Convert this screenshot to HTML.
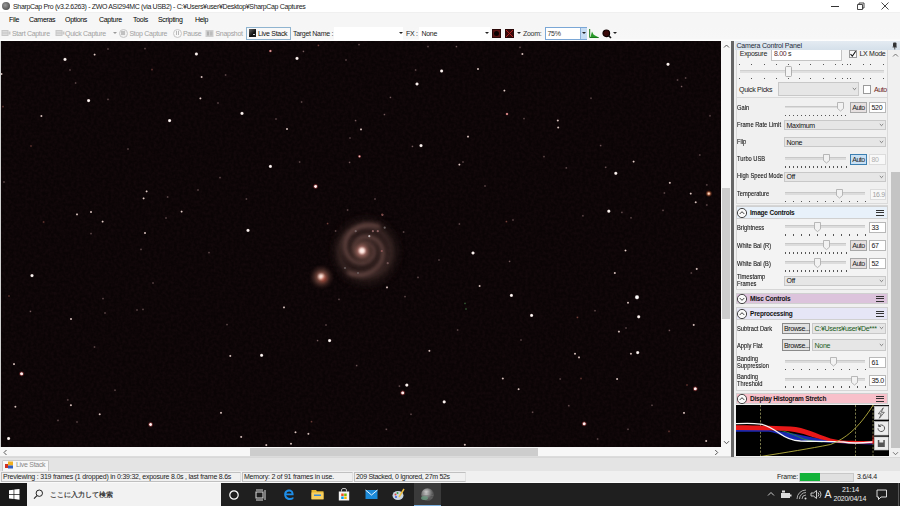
<!DOCTYPE html>
<html><head><meta charset="utf-8">
<style>
*{margin:0;padding:0;box-sizing:border-box}
html,body{width:900px;height:506px;overflow:hidden;background:#f0f0f0;font-family:"Liberation Sans",sans-serif;color:#000}
.a{position:absolute;white-space:nowrap}
.t{position:absolute;white-space:nowrap;font-size:7px;line-height:8px;letter-spacing:-0.3px}
#title{left:0;top:0;width:900px;height:12px;background:#fff}
#menu{left:0;top:12.5px;width:900px;height:14px;background:#f6f6f6}
#tool{left:0;top:26px;width:900px;height:15px;background:linear-gradient(#f6f6f6,#f7f7f7 85%,#fff)}
#img{left:0;top:41px;width:721px;height:406px;background:#0b0405;overflow:hidden}
#vs{left:721px;top:41px;width:10px;height:406px;background:#f0f0f0}
#split{left:731px;top:41px;width:2px;height:416px;background:#6a6a6a}
#panel{left:733px;top:41px;width:158px;height:416px;background:#f0f0f0}
#rs{left:891px;top:41px;width:9px;height:416px;background:#f0f0f0}
#hs{left:0;top:447px;width:731px;height:10px;background:#f0f0f0}
#tabs{left:0;top:457px;width:900px;height:14px;background:#f0f0f0}
#status{left:0;top:471px;width:900px;height:12px;background:#f0f0f0}
#task{left:0;top:483px;width:900px;height:23px;background:#1e1e1e}
.g{color:#a0a0a0}
</style></head><body>
<!-- title bar -->
<div class="a" id="title"></div>
<div class="a" style="left:1.5px;top:2px;width:8px;height:8px;border-radius:50%;background:radial-gradient(circle at 40% 40%,#9a9a9a,#3a3a3a)"></div>
<div class="t" style="left:13px;top:2.8px;color:#222;letter-spacing:-0.34px">SharpCap Pro (v3.2.6263) - ZWO ASI294MC (via USB2) - C:¥Users¥user¥Desktop¥SharpCap Captures</div>
<div class="a" style="left:831px;top:6px;width:8px;height:1px;background:#333"></div>
<svg class="a" style="left:855px;top:1px" width="10" height="10"><path d="M2.5 3.5h5v5h-5z M4 3.5v-1.5h5v5h-1.5" fill="none" stroke="#333" stroke-width="0.9"/></svg>
<svg class="a" style="left:880px;top:1px" width="10" height="10"><path d="M1.5 1.5l7 7M8.5 1.5l-7 7" stroke="#333" stroke-width="0.9"/></svg>
<!-- menu -->
<div class="a" id="menu"></div>
<div class="t" style="left:9px;top:15.5px">File</div>
<div class="t" style="left:29px;top:15.5px">Cameras</div>
<div class="t" style="left:65px;top:15.5px">Options</div>
<div class="t" style="left:99px;top:15.5px">Capture</div>
<div class="t" style="left:133px;top:15.5px">Tools</div>
<div class="t" style="left:158px;top:15.5px">Scripting</div>
<div class="t" style="left:195px;top:15.5px">Help</div>
<!-- toolbar -->
<div class="a" id="tool"></div>
<svg class="a" style="left:1px;top:29px" width="10" height="8"><rect x="0.5" y="1" width="7" height="6" fill="#c8c8c8"/><rect x="7.5" y="2.5" width="2" height="3" fill="#c8c8c8"/><path d="M1.5 2.5h5M1.5 4h5M1.5 5.5h5" stroke="#e8e8e8" stroke-width="0.6"/></svg>
<div class="t g" style="left:12px;top:29.5px">Start Capture</div>
<svg class="a" style="left:55px;top:29px" width="10" height="8"><rect x="0.5" y="1" width="7" height="6" fill="#c8c8c8"/><rect x="7.5" y="2.5" width="2" height="3" fill="#c8c8c8"/><path d="M1.5 2.5h5M1.5 4h5M1.5 5.5h5" stroke="#e8e8e8" stroke-width="0.6"/></svg>
<div class="t g" style="left:65px;top:29.5px">Quick Capture</div>
<div class="a" style="left:113px;top:32px;width:0;height:0;border-left:2px solid transparent;border-right:2px solid transparent;border-top:2px solid #999"></div>
<div class="a" style="left:118.5px;top:28.5px;width:9px;height:9px;border-radius:50%;border:1px solid #c8c8c8;background:#f0f0f0"></div>
<div class="a" style="left:121px;top:31px;width:4px;height:4px;background:#c0c0c0"></div>
<div class="t g" style="left:129.5px;top:29.5px">Stop Capture</div>
<div class="a" style="left:172.5px;top:28.5px;width:9px;height:9px;border-radius:50%;border:1px solid #c8c8c8"></div>
<div class="a" style="left:175.5px;top:31px;width:1px;height:4px;background:#b8b8b8"></div>
<div class="a" style="left:177.5px;top:31px;width:1px;height:4px;background:#b8b8b8"></div>
<div class="t g" style="left:183px;top:29.5px">Pause</div>
<svg class="a" style="left:205px;top:29px" width="9" height="9"><rect x="0.5" y="1" width="8" height="7" fill="#d0d0d0"/><rect x="2" y="2.5" width="2" height="4" fill="#b0b0b0"/><rect x="5" y="2.5" width="2.5" height="4" fill="#bcbcbc"/></svg>
<div class="t g" style="left:215.5px;top:29.5px">Snapshot</div>
<div class="a" style="left:246px;top:27px;width:45px;height:12.5px;border:1px solid #8fb4d0;background:#f8f8f8"></div>
<div class="a" style="left:249px;top:29px;width:7px;height:8px;background:linear-gradient(135deg,#666 0%,#111 60%,#222 100%)"></div>
<div class="a" style="left:253px;top:34px;width:2px;height:1px;background:#ccc"></div>
<div class="t" style="left:258px;top:29.5px;color:#111">Live Stack</div>
<div class="t" style="left:293px;top:29.5px;color:#222">Target Name :</div>
<div class="a" style="left:333.5px;top:26.5px;width:69px;height:13px;background:#fff"></div>
<div class="a" style="left:399px;top:32px;width:0;height:0;border-left:2px solid transparent;border-right:2px solid transparent;border-top:2px solid #222"></div>
<div class="t" style="left:406px;top:29.5px;color:#222">FX :</div>
<div class="a" style="left:418.5px;top:26.5px;width:71px;height:13px;background:#fff"></div>
<div class="t" style="left:421.5px;top:29.5px;color:#222">None</div>
<div class="a" style="left:485px;top:32px;width:0;height:0;border-left:2px solid transparent;border-right:2px solid transparent;border-top:2px solid #222"></div>
<div class="a" style="left:492px;top:29px;width:9px;height:9px;background:#5a1414;border:1px solid #2a0808"></div>
<div class="a" style="left:494px;top:31px;width:5px;height:5px;border-radius:50%;background:#0a0000"></div>
<svg class="a" style="left:504.5px;top:29px" width="9" height="9"><rect width="9" height="9" fill="#3a0a0a"/><path d="M1 1l7 7M8 1l-7 7" stroke="#b02020" stroke-width="1"/><rect x="0.5" y="0.5" width="8" height="8" fill="none" stroke="#2a0808"/></svg>
<div class="a" style="left:516.5px;top:32px;width:0;height:0;border-left:2px solid transparent;border-right:2px solid transparent;border-top:2px solid #222"></div>
<div class="t" style="left:523px;top:29.5px;color:#333">Zoom:</div>
<div class="a" style="left:545px;top:27px;width:42px;height:12.5px;border:1px solid #7aa7d6;background:#fff"></div>
<div class="t" style="left:547.5px;top:29.5px;color:#333">75%</div>
<div class="a" style="left:580px;top:27.5px;width:6.5px;height:11.5px;background:#c6dcf2;border-left:1px solid #8cb0d8"></div>
<div class="a" style="left:581.5px;top:32px;width:0;height:0;border-left:2px solid transparent;border-right:2px solid transparent;border-top:2px solid #222"></div>
<svg class="a" style="left:589px;top:29px" width="10" height="9"><path d="M0.7 0v8.5h9" fill="none" stroke="#1a7a1a" stroke-width="1"/><path d="M1.5 8L3 2.5 4.5 5.5 6 6.5 9 8z" fill="#2a9a2a"/></svg>
<svg class="a" style="left:602px;top:29px" width="10" height="10"><circle cx="4.3" cy="4.3" r="3.3" fill="#3a0a0a" stroke="#110000" stroke-width="1.2"/><path d="M6.5 6.5l2.5 2.5" stroke="#111" stroke-width="1.6"/></svg>
<div class="a" style="left:612.5px;top:32px;width:0;height:0;border-left:2px solid transparent;border-right:2px solid transparent;border-top:2px solid #222"></div>
<div class="a" style="left:0;top:41px;width:721px;height:406px;background:#0a0405;overflow:hidden">
<svg width="721" height="406" style="position:absolute;left:0;top:0">
<defs>
<radialGradient id="gb"><stop offset="0" stop-color="#fff"/><stop offset="0.45" stop-color="#f6ece8"/><stop offset="1" stop-color="#f4e0e0" stop-opacity="0"/></radialGradient>
<radialGradient id="gB"><stop offset="0" stop-color="#fff"/><stop offset="0.5" stop-color="#fafafa"/><stop offset="1" stop-color="#f0e0e0" stop-opacity="0"/></radialGradient>
<radialGradient id="gm"><stop offset="0" stop-color="#e8d8d0"/><stop offset="0.4" stop-color="#b8a4a0"/><stop offset="1" stop-color="#806868" stop-opacity="0"/></radialGradient>
<radialGradient id="gf"><stop offset="0" stop-color="#84686a"/><stop offset="1" stop-color="#3a2a2a" stop-opacity="0"/></radialGradient>
<radialGradient id="gr"><stop offset="0" stop-color="#fff"/><stop offset="0.38" stop-color="#f6dcdc"/><stop offset="0.65" stop-color="#b04848" stop-opacity="0.5"/><stop offset="1" stop-color="#802020" stop-opacity="0"/></radialGradient>
<radialGradient id="gp"><stop offset="0" stop-color="#f0d0d0"/><stop offset="0.45" stop-color="#c07070"/><stop offset="1" stop-color="#803030" stop-opacity="0"/></radialGradient>
<radialGradient id="go"><stop offset="0" stop-color="#7a4a40"/><stop offset="1" stop-color="#502020" stop-opacity="0"/></radialGradient>
<radialGradient id="gO"><stop offset="0" stop-color="#fff0e0"/><stop offset="0.25" stop-color="#f0b090"/><stop offset="0.6" stop-color="#a05030" stop-opacity="0.55"/><stop offset="1" stop-color="#602010" stop-opacity="0"/></radialGradient>
<radialGradient id="gg"><stop offset="0" stop-color="#4a7a4a"/><stop offset="1" stop-color="#204020" stop-opacity="0"/></radialGradient>
<radialGradient id="gcore"><stop offset="0" stop-color="#fff4f0"/><stop offset="0.15" stop-color="#f0c8c0"/><stop offset="0.35" stop-color="#a06860" stop-opacity="0.8"/><stop offset="0.65" stop-color="#604038" stop-opacity="0.4"/><stop offset="1" stop-color="#301c18" stop-opacity="0"/></radialGradient>
<radialGradient id="gcomp"><stop offset="0" stop-color="#fff8f0"/><stop offset="0.12" stop-color="#f0c8b8"/><stop offset="0.35" stop-color="#a86858" stop-opacity="0.65"/><stop offset="0.7" stop-color="#5a3830" stop-opacity="0.35"/><stop offset="1" stop-color="#301010" stop-opacity="0"/></radialGradient>
<filter id="bl" x="-50%" y="-50%" width="200%" height="200%"><feGaussianBlur stdDeviation="1.6"/></filter>
<filter id="bl3" x="-50%" y="-50%" width="200%" height="200%"><feGaussianBlur stdDeviation="2"/></filter>
<filter id="bl4" x="-100%" y="-100%" width="300%" height="300%"><feGaussianBlur stdDeviation="0.5"/></filter>
<filter id="bl2" x="-50%" y="-50%" width="200%" height="200%"><feGaussianBlur stdDeviation="4"/></filter>
<filter id="noise" x="0" y="0" width="100%" height="100%"><feTurbulence type="fractalNoise" baseFrequency="0.35" numOctaves="2" seed="3"/><feColorMatrix values="0 0 0 0 0.12  0 0 0 0 0.03  0 0 0 0 0.05  0.9 0 0 0 -0.25"/></filter>
</defs>
<rect width="721" height="406" filter="url(#noise)" opacity="0.22"/>
<ellipse cx="366" cy="210.8" rx="31" ry="32" fill="#3c2a26" filter="url(#bl2)" opacity="0.55"/>
<ellipse cx="365" cy="210.8" rx="26" ry="25" fill="none" stroke="#6a4c48" stroke-width="3" filter="url(#bl3)" opacity="0.35"/>
<path d="M359.2 205.7 L359.6 205.0 L360.0 204.4 L360.6 203.8 L361.2 203.3 L361.9 202.8 L362.7 202.4 L363.6 202.2 L364.5 202.0 L365.5 201.9 L366.5 202.0 L367.5 202.2 L368.5 202.5 L369.5 203.0 L370.4 203.6 L371.3 204.3 L372.0 205.1 L372.7 206.1 L373.2 207.2 L373.6 208.3 L373.9 209.5 L374.0 210.8 L373.9 212.1 L373.6 213.4 L373.1 214.7 L372.4 216.0 L371.6 217.2 L370.5 218.3 L369.3 219.3 L367.9 220.2 L366.4 220.9 L364.7 221.4 L363.0 221.8 L361.1 221.9 L359.2 221.7 L357.3 221.4 L355.4 220.7 L353.6 219.9 L351.8 218.7 L350.2 217.4 L348.7 215.8 L347.4 213.9 L346.4 211.9 L345.6 209.8 L345.2 207.4 L345.0 205.0 L345.2 202.5 L345.7 200.0 L346.6 197.5 L347.9 195.1 L349.6 192.8 L351.5 190.7 L353.9 188.7 L356.5 187.1 L359.4 185.7 L362.6 184.7 L366.0 184.1 L369.5 183.9 L373.1 184.2 L376.8 184.9 L380.4 186.0" fill="none" stroke="#7e5a54" stroke-width="3.8" filter="url(#bl3)" opacity="0.62"/>
<path d="M359.2 205.7 L359.6 205.0 L360.0 204.4 L360.6 203.8 L361.2 203.3 L361.9 202.8 L362.7 202.4 L363.6 202.2 L364.5 202.0 L365.5 201.9 L366.5 202.0 L367.5 202.2 L368.5 202.5 L369.5 203.0 L370.4 203.6 L371.3 204.3 L372.0 205.1 L372.7 206.1 L373.2 207.2 L373.6 208.3 L373.9 209.5 L374.0 210.8 L373.9 212.1 L373.6 213.4 L373.1 214.7 L372.4 216.0 L371.6 217.2 L370.5 218.3 L369.3 219.3 L367.9 220.2 L366.4 220.9 L364.7 221.4 L363.0 221.8 L361.1 221.9 L359.2 221.7 L357.3 221.4 L355.4 220.7 L353.6 219.9 L351.8 218.7 L350.2 217.4 L348.7 215.8 L347.4 213.9 L346.4 211.9 L345.6 209.8 L345.2 207.4 L345.0 205.0 L345.2 202.5 L345.7 200.0 L346.6 197.5 L347.9 195.1 L349.6 192.8 L351.5 190.7 L353.9 188.7 L356.5 187.1 L359.4 185.7 L362.6 184.7 L366.0 184.1 L369.5 183.9 L373.1 184.2 L376.8 184.9 L380.4 186.0" fill="none" stroke="#a07068" stroke-width="1" filter="url(#bl)" opacity="0.35"/>
<path d="M368.8 211.9 L368.4 212.6 L368.0 213.2 L367.4 213.8 L366.8 214.3 L366.1 214.8 L365.3 215.2 L364.4 215.4 L363.5 215.6 L362.5 215.7 L361.5 215.6 L360.5 215.4 L359.5 215.1 L358.5 214.6 L357.6 214.0 L356.7 213.3 L356.0 212.5 L355.3 211.5 L354.8 210.4 L354.4 209.3 L354.1 208.1 L354.0 206.8 L354.1 205.5 L354.4 204.2 L354.9 202.9 L355.6 201.6 L356.4 200.4 L357.5 199.3 L358.7 198.3 L360.1 197.4 L361.6 196.7 L363.3 196.2 L365.0 195.8 L366.9 195.7 L368.8 195.9 L370.7 196.2 L372.6 196.9 L374.4 197.7 L376.2 198.9 L377.8 200.2 L379.3 201.8 L380.6 203.7 L381.6 205.7 L382.4 207.8 L382.8 210.2 L383.0 212.6 L382.8 215.1 L382.3 217.6 L381.4 220.1 L380.1 222.5 L378.4 224.8 L376.5 226.9 L374.1 228.9 L371.5 230.5 L368.6 231.9 L365.4 232.9 L362.0 233.5 L358.5 233.7 L354.9 233.4 L351.2 232.7 L347.6 231.6" fill="none" stroke="#7e5a54" stroke-width="3.8" filter="url(#bl3)" opacity="0.62"/>
<path d="M368.8 211.9 L368.4 212.6 L368.0 213.2 L367.4 213.8 L366.8 214.3 L366.1 214.8 L365.3 215.2 L364.4 215.4 L363.5 215.6 L362.5 215.7 L361.5 215.6 L360.5 215.4 L359.5 215.1 L358.5 214.6 L357.6 214.0 L356.7 213.3 L356.0 212.5 L355.3 211.5 L354.8 210.4 L354.4 209.3 L354.1 208.1 L354.0 206.8 L354.1 205.5 L354.4 204.2 L354.9 202.9 L355.6 201.6 L356.4 200.4 L357.5 199.3 L358.7 198.3 L360.1 197.4 L361.6 196.7 L363.3 196.2 L365.0 195.8 L366.9 195.7 L368.8 195.9 L370.7 196.2 L372.6 196.9 L374.4 197.7 L376.2 198.9 L377.8 200.2 L379.3 201.8 L380.6 203.7 L381.6 205.7 L382.4 207.8 L382.8 210.2 L383.0 212.6 L382.8 215.1 L382.3 217.6 L381.4 220.1 L380.1 222.5 L378.4 224.8 L376.5 226.9 L374.1 228.9 L371.5 230.5 L368.6 231.9 L365.4 232.9 L362.0 233.5 L358.5 233.7 L354.9 233.4 L351.2 232.7 L347.6 231.6" fill="none" stroke="#a07068" stroke-width="1" filter="url(#bl)" opacity="0.35"/>
<circle cx="362" cy="209.8" r="13" fill="url(#gcore)"/>
<circle cx="362" cy="209.8" r="2.2" fill="#fff0ea" filter="url(#bl)"/>
<circle cx="369.3" cy="195.2" r="1.1" fill="#d8d0d0" opacity="0.8" filter="url(#bl4)"/>
<circle cx="382.4" cy="173.8" r="1.1" fill="#c08080" opacity="0.8" filter="url(#bl4)"/>
<circle cx="384.7" cy="186.7" r="1.1" fill="#807878" opacity="0.8" filter="url(#bl4)"/>
<circle cx="355.7" cy="190.2" r="1.1" fill="#807070" opacity="0.8" filter="url(#bl4)"/>
<circle cx="372.9" cy="190.2" r="1.1" fill="#a07070" opacity="0.8" filter="url(#bl4)"/>
<circle cx="377.8" cy="190.2" r="1.1" fill="#a07070" opacity="0.8" filter="url(#bl4)"/>
<circle cx="381.8" cy="210" r="1.1" fill="#a06060" opacity="0.8" filter="url(#bl4)"/>
<circle cx="387.7" cy="222.2" r="1.1" fill="#806060" opacity="0.8" filter="url(#bl4)"/>
<circle cx="345" cy="227" r="1.1" fill="#706868" opacity="0.8" filter="url(#bl4)"/>
<circle cx="358" cy="232" r="1.1" fill="#706868" opacity="0.8" filter="url(#bl4)"/>
<circle cx="321.5" cy="236" r="13" fill="url(#gcomp)"/>
<circle cx="323.5" cy="238" r="3" fill="#a02818" opacity="0.45" filter="url(#bl)"/>
<circle cx="320.5" cy="235" r="1.6" fill="#fff" filter="url(#bl)"/>
<circle cx="65.0" cy="18.4" r="2.1" fill="url(#gb)"/>
<circle cx="94.6" cy="13.6" r="1.55" fill="url(#gm)"/>
<circle cx="108.0" cy="8.0" r="1.55" fill="url(#gf)"/>
<circle cx="145.0" cy="7.6" r="1.55" fill="url(#gf)"/>
<circle cx="152.0" cy="28.6" r="1.55" fill="url(#go)"/>
<circle cx="70.0" cy="29.0" r="1.55" fill="url(#gf)"/>
<circle cx="75.6" cy="42.0" r="1.55" fill="url(#gf)"/>
<circle cx="88.6" cy="59.6" r="2.1" fill="url(#gb)"/>
<circle cx="108.0" cy="58.4" r="1.55" fill="url(#gf)"/>
<circle cx="41.4" cy="75.0" r="1.55" fill="url(#gm)"/>
<circle cx="169.6" cy="79.6" r="2.1" fill="url(#gb)"/>
<circle cx="3.0" cy="65.6" r="1.55" fill="url(#go)"/>
<circle cx="1.5" cy="33.0" r="1.55" fill="url(#gm)"/>
<circle cx="196.4" cy="13.0" r="2.1" fill="url(#gb)"/>
<circle cx="270.4" cy="10.0" r="1.8" fill="url(#gp)"/>
<circle cx="297.0" cy="17.4" r="2.1" fill="url(#gb)"/>
<circle cx="318.4" cy="4.4" r="1.55" fill="url(#go)"/>
<circle cx="303.4" cy="10.4" r="1.55" fill="url(#gf)"/>
<circle cx="346.0" cy="19.0" r="1.55" fill="url(#gf)"/>
<circle cx="359.0" cy="3.6" r="1.55" fill="url(#gf)"/>
<circle cx="201.6" cy="36.0" r="1.55" fill="url(#gm)"/>
<circle cx="225.6" cy="34.0" r="1.55" fill="url(#gf)"/>
<circle cx="200.4" cy="57.4" r="1.55" fill="url(#gm)"/>
<circle cx="218.0" cy="62.0" r="1.55" fill="url(#gf)"/>
<circle cx="242.0" cy="72.4" r="2.1" fill="url(#gb)"/>
<circle cx="301.6" cy="61.0" r="1.55" fill="url(#gf)"/>
<circle cx="276.0" cy="78.0" r="1.55" fill="url(#gf)"/>
<circle cx="287.0" cy="88.0" r="1.55" fill="url(#gm)"/>
<circle cx="355.6" cy="79.6" r="1.55" fill="url(#gf)"/>
<circle cx="350.0" cy="97.0" r="1.55" fill="url(#gf)"/>
<circle cx="441.6" cy="30.0" r="2.1" fill="url(#gb)"/>
<circle cx="417.0" cy="43.0" r="2.1" fill="url(#gb)"/>
<circle cx="478.0" cy="28.0" r="1.55" fill="url(#gm)"/>
<circle cx="504.4" cy="49.6" r="1.55" fill="url(#gm)"/>
<circle cx="507.0" cy="73.0" r="1.8" fill="url(#gp)"/>
<circle cx="524.0" cy="77.6" r="1.55" fill="url(#gf)"/>
<circle cx="522.4" cy="13.0" r="1.55" fill="url(#gm)"/>
<circle cx="520.0" cy="6.4" r="1.55" fill="url(#gf)"/>
<circle cx="428.0" cy="5.6" r="1.55" fill="url(#gf)"/>
<circle cx="456.4" cy="5.6" r="1.55" fill="url(#gf)"/>
<circle cx="415.6" cy="29.0" r="1.55" fill="url(#gf)"/>
<circle cx="390.4" cy="56.4" r="1.55" fill="url(#gf)"/>
<circle cx="384.4" cy="73.6" r="1.55" fill="url(#gf)"/>
<circle cx="361.0" cy="88.4" r="1.55" fill="url(#gm)"/>
<circle cx="468.0" cy="95.6" r="1.55" fill="url(#gm)"/>
<circle cx="668.0" cy="23.3" r="2.1" fill="url(#gb)"/>
<circle cx="677.5" cy="39.0" r="1.55" fill="url(#gf)"/>
<circle cx="685.6" cy="37.0" r="1.55" fill="url(#gf)"/>
<circle cx="681.6" cy="45.5" r="1.55" fill="url(#gf)"/>
<circle cx="591.0" cy="57.2" r="1.55" fill="url(#gf)"/>
<circle cx="557.8" cy="79.5" r="1.55" fill="url(#gm)"/>
<circle cx="558.2" cy="86.5" r="1.55" fill="url(#gm)"/>
<circle cx="710.0" cy="74.8" r="1.55" fill="url(#gf)"/>
<circle cx="31.0" cy="105.0" r="1.55" fill="url(#go)"/>
<circle cx="128.0" cy="108.0" r="1.55" fill="url(#gf)"/>
<circle cx="4.0" cy="141.0" r="1.55" fill="url(#gf)"/>
<circle cx="146.6" cy="150.4" r="1.55" fill="url(#gm)"/>
<circle cx="143.6" cy="157.4" r="1.55" fill="url(#gm)"/>
<circle cx="77.0" cy="173.4" r="1.55" fill="url(#gm)"/>
<circle cx="91.0" cy="171.0" r="1.55" fill="url(#gm)"/>
<circle cx="102.6" cy="180.6" r="1.55" fill="url(#gm)"/>
<circle cx="43.6" cy="181.0" r="1.55" fill="url(#go)"/>
<circle cx="91.0" cy="192.6" r="1.55" fill="url(#gf)"/>
<circle cx="145.0" cy="192.0" r="1.55" fill="url(#gm)"/>
<circle cx="167.6" cy="156.0" r="1.55" fill="url(#gf)"/>
<circle cx="166.0" cy="177.0" r="1.55" fill="url(#gf)"/>
<circle cx="270.4" cy="125.4" r="2.1" fill="url(#gb)"/>
<circle cx="299.6" cy="121.0" r="1.55" fill="url(#gf)"/>
<circle cx="349.6" cy="121.4" r="1.55" fill="url(#gf)"/>
<circle cx="359.5" cy="115.4" r="1.8" fill="url(#gp)"/>
<circle cx="315.6" cy="145.4" r="2.9" fill="url(#gr)"/>
<circle cx="246.4" cy="158.0" r="1.55" fill="url(#gf)"/>
<circle cx="198.0" cy="149.0" r="1.55" fill="url(#gf)"/>
<circle cx="220.0" cy="136.6" r="1.55" fill="url(#gf)"/>
<circle cx="181.6" cy="170.6" r="1.55" fill="url(#gm)"/>
<circle cx="248.0" cy="189.4" r="2.1" fill="url(#gb)"/>
<circle cx="347.6" cy="169.0" r="1.55" fill="url(#gf)"/>
<circle cx="327.6" cy="182.6" r="1.55" fill="url(#go)"/>
<circle cx="335.6" cy="190.0" r="1.55" fill="url(#gf)"/>
<circle cx="421.0" cy="104.6" r="2.1" fill="url(#gb)"/>
<circle cx="412.4" cy="105.4" r="1.55" fill="url(#gf)"/>
<circle cx="459.4" cy="123.6" r="1.55" fill="url(#gm)"/>
<circle cx="463.0" cy="121.0" r="1.55" fill="url(#gf)"/>
<circle cx="485.0" cy="145.0" r="1.55" fill="url(#gf)"/>
<circle cx="375.0" cy="158.0" r="1.55" fill="url(#gf)"/>
<circle cx="382.0" cy="173.4" r="1.55" fill="url(#go)"/>
<circle cx="403.6" cy="191.0" r="1.55" fill="url(#gf)"/>
<circle cx="459.4" cy="183.0" r="1.55" fill="url(#gf)"/>
<circle cx="506.4" cy="180.6" r="1.55" fill="url(#go)"/>
<circle cx="513.0" cy="179.0" r="1.55" fill="url(#gf)"/>
<circle cx="615.8" cy="132.3" r="2.1" fill="url(#gb)"/>
<circle cx="633.6" cy="120.6" r="1.55" fill="url(#gm)"/>
<circle cx="605.7" cy="126.3" r="1.55" fill="url(#gf)"/>
<circle cx="600.7" cy="104.6" r="1.55" fill="url(#gf)"/>
<circle cx="566.3" cy="126.9" r="1.55" fill="url(#gf)"/>
<circle cx="544.0" cy="115.6" r="1.55" fill="url(#gf)"/>
<circle cx="669.8" cy="141.8" r="1.55" fill="url(#gm)"/>
<circle cx="664.4" cy="152.0" r="1.55" fill="url(#gf)"/>
<circle cx="690.7" cy="152.6" r="1.55" fill="url(#gm)"/>
<circle cx="706.8" cy="143.9" r="1.55" fill="url(#gf)"/>
<circle cx="695.7" cy="161.3" r="1.55" fill="url(#gm)"/>
<circle cx="706.8" cy="164.0" r="1.55" fill="url(#gf)"/>
<circle cx="708.8" cy="152.6" r="3.6" fill="url(#gO)"/>
<circle cx="608.8" cy="170.2" r="2.1" fill="url(#gb)"/>
<circle cx="621.9" cy="171.4" r="1.55" fill="url(#gf)"/>
<circle cx="631.0" cy="176.8" r="1.55" fill="url(#gf)"/>
<circle cx="582.9" cy="174.8" r="1.55" fill="url(#gf)"/>
<circle cx="663.0" cy="169.4" r="1.55" fill="url(#gf)"/>
<circle cx="699.8" cy="114.0" r="1.55" fill="url(#gf)"/>
<circle cx="32.0" cy="234.6" r="2.1" fill="url(#gb)"/>
<circle cx="141.0" cy="208.4" r="1.55" fill="url(#gf)"/>
<circle cx="153.0" cy="242.0" r="1.55" fill="url(#gf)"/>
<circle cx="103.0" cy="257.6" r="1.55" fill="url(#gf)"/>
<circle cx="71.0" cy="278.0" r="1.55" fill="url(#gm)"/>
<circle cx="30.4" cy="270.4" r="1.55" fill="url(#gf)"/>
<circle cx="105.0" cy="272.0" r="1.55" fill="url(#gf)"/>
<circle cx="137.0" cy="269.0" r="1.55" fill="url(#gf)"/>
<circle cx="143.0" cy="268.4" r="1.55" fill="url(#gf)"/>
<circle cx="9.0" cy="255.0" r="1.55" fill="url(#go)"/>
<circle cx="284.0" cy="266.4" r="1.55" fill="url(#gm)"/>
<circle cx="227.0" cy="283.6" r="1.55" fill="url(#gf)"/>
<circle cx="329.6" cy="299.6" r="2.1" fill="url(#gb)"/>
<circle cx="317.6" cy="299.6" r="1.55" fill="url(#gf)"/>
<circle cx="326.0" cy="284.0" r="1.55" fill="url(#gf)"/>
<circle cx="209.0" cy="211.6" r="1.55" fill="url(#gf)"/>
<circle cx="339.0" cy="258.4" r="1.55" fill="url(#gf)"/>
<circle cx="473.0" cy="212.0" r="2.1" fill="url(#gb)"/>
<circle cx="439.0" cy="219.0" r="1.55" fill="url(#gf)"/>
<circle cx="509.6" cy="220.4" r="1.55" fill="url(#gf)"/>
<circle cx="479.6" cy="245.0" r="1.55" fill="url(#gm)"/>
<circle cx="511.4" cy="254.4" r="2.1" fill="url(#gb)"/>
<circle cx="531.6" cy="274.4" r="2.1" fill="url(#gb)"/>
<circle cx="387.0" cy="246.4" r="1.55" fill="url(#gm)"/>
<circle cx="418.0" cy="236.4" r="1.55" fill="url(#gf)"/>
<circle cx="405.0" cy="255.6" r="1.55" fill="url(#gf)"/>
<circle cx="465.0" cy="262.4" r="1.5" fill="url(#gg)"/>
<circle cx="466.0" cy="268.0" r="1.5" fill="url(#gg)"/>
<circle cx="457.6" cy="289.0" r="1.55" fill="url(#gf)"/>
<circle cx="521.0" cy="299.0" r="1.55" fill="url(#gf)"/>
<circle cx="625.5" cy="209.5" r="1.55" fill="url(#gm)"/>
<circle cx="614.8" cy="232.0" r="1.55" fill="url(#gm)"/>
<circle cx="696.7" cy="227.9" r="1.55" fill="url(#gm)"/>
<circle cx="691.3" cy="232.0" r="1.55" fill="url(#gf)"/>
<circle cx="637.0" cy="256.2" r="2.6" fill="url(#gB)"/>
<circle cx="628.0" cy="261.7" r="1.55" fill="url(#gm)"/>
<circle cx="638.7" cy="275.8" r="2.1" fill="url(#gb)"/>
<circle cx="577.4" cy="276.4" r="1.55" fill="url(#go)"/>
<circle cx="595.0" cy="269.7" r="1.55" fill="url(#gf)"/>
<circle cx="693.7" cy="283.9" r="1.55" fill="url(#gm)"/>
<circle cx="618.9" cy="290.6" r="1.55" fill="url(#gm)"/>
<circle cx="626.0" cy="287.0" r="1.55" fill="url(#gf)"/>
<circle cx="669.4" cy="289.4" r="1.55" fill="url(#gf)"/>
<circle cx="14.0" cy="323.1" r="1.55" fill="url(#gm)"/>
<circle cx="21.6" cy="332.8" r="2.9" fill="url(#gr)"/>
<circle cx="15.4" cy="365.7" r="1.55" fill="url(#gm)"/>
<circle cx="8.6" cy="397.5" r="2.1" fill="url(#gb)"/>
<circle cx="70.9" cy="364.2" r="1.55" fill="url(#gm)"/>
<circle cx="67.8" cy="358.9" r="1.55" fill="url(#gf)"/>
<circle cx="99.7" cy="373.3" r="1.55" fill="url(#gm)"/>
<circle cx="58.0" cy="379.4" r="1.55" fill="url(#gf)"/>
<circle cx="77.0" cy="381.0" r="1.55" fill="url(#gf)"/>
<circle cx="115.0" cy="349.2" r="1.55" fill="url(#gf)"/>
<circle cx="94.5" cy="306.0" r="1.55" fill="url(#gf)"/>
<circle cx="150.6" cy="383.5" r="2.9" fill="url(#gr)"/>
<circle cx="230.3" cy="314.9" r="1.55" fill="url(#gm)"/>
<circle cx="261.6" cy="314.3" r="2.1" fill="url(#gb)"/>
<circle cx="221.0" cy="371.8" r="1.55" fill="url(#gm)"/>
<circle cx="241.2" cy="395.9" r="1.55" fill="url(#gm)"/>
<circle cx="266.3" cy="404.1" r="1.55" fill="url(#gm)"/>
<circle cx="291.0" cy="402.7" r="1.55" fill="url(#gm)"/>
<circle cx="295.5" cy="391.3" r="1.55" fill="url(#gm)"/>
<circle cx="308.4" cy="392.8" r="1.55" fill="url(#gm)"/>
<circle cx="311.5" cy="380.7" r="1.55" fill="url(#go)"/>
<circle cx="356.7" cy="324.6" r="1.55" fill="url(#gf)"/>
<circle cx="429.4" cy="309.8" r="1.55" fill="url(#gm)"/>
<circle cx="406.8" cy="344.1" r="2.1" fill="url(#gb)"/>
<circle cx="402.7" cy="351.9" r="2.9" fill="url(#gr)"/>
<circle cx="399.4" cy="345.1" r="1.55" fill="url(#gf)"/>
<circle cx="444.2" cy="360.9" r="2.1" fill="url(#gb)"/>
<circle cx="502.8" cy="337.5" r="1.55" fill="url(#gm)"/>
<circle cx="518.6" cy="348.2" r="1.55" fill="url(#gm)"/>
<circle cx="386.3" cy="388.3" r="1.55" fill="url(#gf)"/>
<circle cx="411.0" cy="373.3" r="1.55" fill="url(#gf)"/>
<circle cx="464.8" cy="403.7" r="1.55" fill="url(#gm)"/>
<circle cx="532.6" cy="371.2" r="1.55" fill="url(#gf)"/>
<circle cx="575.0" cy="312.7" r="1.55" fill="url(#gm)"/>
<circle cx="579.0" cy="316.4" r="1.55" fill="url(#gm)"/>
<circle cx="630.9" cy="312.7" r="1.55" fill="url(#gm)"/>
<circle cx="637.7" cy="311.6" r="2.1" fill="url(#gb)"/>
<circle cx="617.1" cy="338.0" r="1.55" fill="url(#gm)"/>
<circle cx="560.2" cy="338.0" r="1.55" fill="url(#gf)"/>
<circle cx="581.0" cy="337.5" r="1.55" fill="url(#go)"/>
<circle cx="695.3" cy="347.8" r="2.9" fill="url(#gr)"/>
<circle cx="687.0" cy="344.0" r="1.55" fill="url(#go)"/>
<circle cx="684.0" cy="371.9" r="1.55" fill="url(#gm)"/>
<circle cx="652.0" cy="364.3" r="1.55" fill="url(#gf)"/>
<circle cx="584.2" cy="382.8" r="2.9" fill="url(#gr)"/>
<circle cx="628.0" cy="388.3" r="1.55" fill="url(#gf)"/>
<circle cx="669.0" cy="390.4" r="1.55" fill="url(#go)"/>
<circle cx="706.2" cy="400.0" r="1.55" fill="url(#gm)"/>
<circle cx="597.6" cy="398.0" r="1.55" fill="url(#gf)"/>
<circle cx="568.8" cy="364.7" r="1.55" fill="url(#gf)"/>
</svg>
<div class="a" style="left:0;top:0;width:1px;height:406px;background:#cfcfcf"></div>
</div>
<div class="a" style="left:733px;top:41px;width:158px;height:416px;background:#f0f0f0"></div>
<div class="a" style="left:736px;top:50px;width:152px;height:48px;background:#f3f3f3;border:1px solid #dadada;border-top:none"></div>
<div class="a" style="left:736px;top:50px;width:152px;height:48px;overflow:hidden"><div class="t" style="left:3.8px;top:-0.5px;color:#222;font-size:7px">Exposure</div>
<div class="a" style="left:35.4px;top:-3px;width:71px;height:13.5px;background:#fff;border:1px solid #c4c4c4"></div>
<div class="t" style="left:38px;top:-0.5px;color:#222"><span style="color:#5a2a2a">8.00</span> s</div>
</div>
<div class="a" style="left:849px;top:50px;width:8px;height:7.5px;background:#fafafa;border:1px solid #9a9a9a"></div>
<svg class="a" style="left:849px;top:50px" width="8" height="8"><path d="M1.5 4l1.8 2.2 3.4-5" fill="none" stroke="#111" stroke-width="1.1"/></svg>
<div class="t" style="left:859.5px;top:50px;color:#222">LX Mode</div>
<div class="a" style="left:739.3px;top:63.6px;width:1px;height:1.5px;background:#555"></div>
<div class="a" style="left:751.1px;top:63.6px;width:1px;height:1.5px;background:#555"></div>
<div class="a" style="left:763.5px;top:63.6px;width:1px;height:1.5px;background:#555"></div>
<div class="a" style="left:775.5px;top:63.6px;width:1px;height:1.5px;background:#555"></div>
<div class="a" style="left:787.7px;top:63.6px;width:1px;height:1.5px;background:#555"></div>
<div class="a" style="left:798.5px;top:63.6px;width:1px;height:1.5px;background:#555"></div>
<div class="a" style="left:810.2px;top:63.6px;width:1px;height:1.5px;background:#555"></div>
<div class="a" style="left:822.9px;top:63.6px;width:1px;height:1.5px;background:#555"></div>
<div class="a" style="left:834.5px;top:63.6px;width:1px;height:1.5px;background:#555"></div>
<div class="a" style="left:841.9px;top:63.6px;width:1px;height:1.5px;background:#555"></div>
<div class="a" style="left:847.1px;top:63.6px;width:1px;height:1.5px;background:#555"></div>
<div class="a" style="left:850.1px;top:63.6px;width:1px;height:1.5px;background:#555"></div>
<div class="a" style="left:862.5px;top:63.6px;width:1px;height:1.5px;background:#555"></div>
<div class="a" style="left:869.5px;top:63.6px;width:1px;height:1.5px;background:#555"></div>
<div class="a" style="left:883.2px;top:63.6px;width:1px;height:1.5px;background:#555"></div>
<div class="a" style="left:740px;top:70px;width:144px;height:2.5px;background:#e0e0e0;border-top:0.5px solid #cfcfcf"></div>
<svg class="a" style="left:785px;top:66px" width="7" height="11"><rect x="0.5" y="0.5" width="6" height="10" rx="1" fill="#f4f4f4" stroke="#a0a0a0" stroke-width="0.8"/></svg>
<div class="a" style="left:739.3px;top:77.8px;width:1px;height:1.5px;background:#555"></div>
<div class="a" style="left:751.1px;top:77.8px;width:1px;height:1.5px;background:#555"></div>
<div class="a" style="left:763.5px;top:77.8px;width:1px;height:1.5px;background:#555"></div>
<div class="a" style="left:775.5px;top:77.8px;width:1px;height:1.5px;background:#555"></div>
<div class="a" style="left:787.7px;top:77.8px;width:1px;height:1.5px;background:#555"></div>
<div class="a" style="left:798.5px;top:77.8px;width:1px;height:1.5px;background:#555"></div>
<div class="a" style="left:810.2px;top:77.8px;width:1px;height:1.5px;background:#555"></div>
<div class="a" style="left:822.9px;top:77.8px;width:1px;height:1.5px;background:#555"></div>
<div class="a" style="left:834.5px;top:77.8px;width:1px;height:1.5px;background:#555"></div>
<div class="a" style="left:841.9px;top:77.8px;width:1px;height:1.5px;background:#555"></div>
<div class="a" style="left:847.1px;top:77.8px;width:1px;height:1.5px;background:#555"></div>
<div class="a" style="left:850.1px;top:77.8px;width:1px;height:1.5px;background:#555"></div>
<div class="a" style="left:862.5px;top:77.8px;width:1px;height:1.5px;background:#555"></div>
<div class="a" style="left:869.5px;top:77.8px;width:1px;height:1.5px;background:#555"></div>
<div class="a" style="left:883.2px;top:77.8px;width:1px;height:1.5px;background:#555"></div>
<div class="t" style="left:739px;top:86px;color:#222;font-size:7px">Quick Picks</div>
<div class="a" style="left:778.4px;top:82.4px;width:81.0px;height:14.0px;background:#e6e6e6;border:1px solid #c8c8c8"></div>
<svg class="a" style="left:852.4px;top:87.4px" width="5" height="4"><path d="M0.8 1l1.7 1.6 1.7-1.6" fill="none" stroke="#555" stroke-width="0.7"/></svg>
<div class="a" style="left:863px;top:85px;width:8px;height:8.5px;background:#fff;border:1px solid #9a9a9a"></div>
<div class="t" style="left:874px;top:86px;color:#6a1a1a;letter-spacing:-0.4px">Auto</div>
<div class="t" style="left:737px;top:105.2px;font-size:6.6px;letter-spacing:0px;color:#111;line-height:6.6px;-webkit-text-stroke:0.1px #222;transform:scaleX(0.87);transform-origin:0 0">Gain</div>
<div class="a" style="left:785px;top:105.5px;width:59px;height:2.5px;background:#dcdcdc;border-top:0.5px solid #c8c8c8"></div>
<svg class="a" style="left:837px;top:102px" width="8" height="10"><path d="M0.5 0.5h6v6l-3 2.5l-3 -2.5z" fill="#f2f2f2" stroke="#a8a8a8" stroke-width="0.8"/></svg>
<div class="a" style="left:784.5px;top:114.5px;width:1px;height:1.5px;background:#555"></div>
<div class="a" style="left:788.5px;top:114.5px;width:1px;height:1.5px;background:#555"></div>
<div class="a" style="left:792.5px;top:114.5px;width:1px;height:1.5px;background:#555"></div>
<div class="a" style="left:796.5px;top:114.5px;width:1px;height:1.5px;background:#555"></div>
<div class="a" style="left:800.5px;top:114.5px;width:1px;height:1.5px;background:#555"></div>
<div class="a" style="left:804.5px;top:114.5px;width:1px;height:1.5px;background:#555"></div>
<div class="a" style="left:808.5px;top:114.5px;width:1px;height:1.5px;background:#555"></div>
<div class="a" style="left:812.5px;top:114.5px;width:1px;height:1.5px;background:#555"></div>
<div class="a" style="left:816.5px;top:114.5px;width:1px;height:1.5px;background:#555"></div>
<div class="a" style="left:820.5px;top:114.5px;width:1px;height:1.5px;background:#555"></div>
<div class="a" style="left:824.5px;top:114.5px;width:1px;height:1.5px;background:#555"></div>
<div class="a" style="left:828.5px;top:114.5px;width:1px;height:1.5px;background:#555"></div>
<div class="a" style="left:832.5px;top:114.5px;width:1px;height:1.5px;background:#555"></div>
<div class="a" style="left:836.5px;top:114.5px;width:1px;height:1.5px;background:#555"></div>
<div class="a" style="left:840.5px;top:114.5px;width:1px;height:1.5px;background:#555"></div>
<div class="a" style="left:844.5px;top:114.5px;width:1px;height:1.5px;background:#555"></div>
<div class="a" style="left:850.4px;top:102.4px;width:17.0px;height:11.0px;background:#e6e0e0;border:1px solid #a8a8a8"></div>
<div class="t" style="left:852.1999999999999px;top:104.30000000000001px;color:#222;letter-spacing:-0.45px">Auto</div>
<div class="a" style="left:869px;top:102.4px;width:17.399999999999977px;height:11.0px;background:#fff;border:1px solid #b8b8b8"></div>
<div class="t" style="left:871.5px;top:104.30000000000001px;color:#111">520</div>
<div class="t" style="left:737px;top:122.2px;font-size:6.6px;letter-spacing:0px;color:#111;line-height:6.6px;-webkit-text-stroke:0.1px #222;transform:scaleX(0.87);transform-origin:0 0">Frame Rate Limit</div>
<div class="a" style="left:783.6px;top:120.4px;width:102.79999999999995px;height:9.799999999999983px;background:#e6e6e6;border:1px solid #c8c8c8"></div>
<div class="t" style="left:786.6px;top:121.7px;color:#111">Maximum</div>
<svg class="a" style="left:879.4px;top:123.3px" width="5" height="4"><path d="M0.8 1l1.7 1.6 1.7-1.6" fill="none" stroke="#555" stroke-width="0.7"/></svg>
<div class="t" style="left:737px;top:139.2px;font-size:6.6px;letter-spacing:0px;color:#111;line-height:6.6px;-webkit-text-stroke:0.1px #222;transform:scaleX(0.87);transform-origin:0 0">Flip</div>
<div class="a" style="left:783.6px;top:137px;width:102.79999999999995px;height:10.400000000000006px;background:#e6e6e6;border:1px solid #c8c8c8"></div>
<div class="t" style="left:786.6px;top:138.6px;color:#111">None</div>
<svg class="a" style="left:879.4px;top:140.2px" width="5" height="4"><path d="M0.8 1l1.7 1.6 1.7-1.6" fill="none" stroke="#555" stroke-width="0.7"/></svg>
<div class="t" style="left:737px;top:156.2px;font-size:6.6px;letter-spacing:0px;color:#111;line-height:6.6px;-webkit-text-stroke:0.1px #222;transform:scaleX(0.87);transform-origin:0 0">Turbo USB</div>
<div class="a" style="left:785px;top:157px;width:61px;height:2.5px;background:#dcdcdc;border-top:0.5px solid #c8c8c8"></div>
<svg class="a" style="left:823px;top:153.5px" width="8" height="10.0"><path d="M0.5 0.5h6v6.0l-3 2.5l-3 -2.5z" fill="#f2f2f2" stroke="#a8a8a8" stroke-width="0.8"/></svg>
<div class="a" style="left:784.5px;top:166.2px;width:1px;height:1.5px;background:#555"></div>
<div class="a" style="left:788.6px;top:166.2px;width:1px;height:1.5px;background:#555"></div>
<div class="a" style="left:792.6px;top:166.2px;width:1px;height:1.5px;background:#555"></div>
<div class="a" style="left:796.7px;top:166.2px;width:1px;height:1.5px;background:#555"></div>
<div class="a" style="left:800.8px;top:166.2px;width:1px;height:1.5px;background:#555"></div>
<div class="a" style="left:804.8px;top:166.2px;width:1px;height:1.5px;background:#555"></div>
<div class="a" style="left:808.9px;top:166.2px;width:1px;height:1.5px;background:#555"></div>
<div class="a" style="left:813.0px;top:166.2px;width:1px;height:1.5px;background:#555"></div>
<div class="a" style="left:817.0px;top:166.2px;width:1px;height:1.5px;background:#555"></div>
<div class="a" style="left:821.1px;top:166.2px;width:1px;height:1.5px;background:#555"></div>
<div class="a" style="left:825.2px;top:166.2px;width:1px;height:1.5px;background:#555"></div>
<div class="a" style="left:829.2px;top:166.2px;width:1px;height:1.5px;background:#555"></div>
<div class="a" style="left:833.3px;top:166.2px;width:1px;height:1.5px;background:#555"></div>
<div class="a" style="left:837.4px;top:166.2px;width:1px;height:1.5px;background:#555"></div>
<div class="a" style="left:841.4px;top:166.2px;width:1px;height:1.5px;background:#555"></div>
<div class="a" style="left:845.5px;top:166.2px;width:1px;height:1.5px;background:#555"></div>
<div class="a" style="left:850.4px;top:154.4px;width:17.0px;height:10.599999999999994px;background:#c8e0f4;border:1px solid #3c7fb1"></div>
<div class="t" style="left:852.1999999999999px;top:156.1px;color:#222;letter-spacing:-0.45px">Auto</div>
<div class="a" style="left:869px;top:154.4px;width:17.399999999999977px;height:10.599999999999994px;background:#f8f8f8;border:1px solid #dcdcdc"></div>
<div class="t" style="left:871.5px;top:156.1px;color:#b0b0b0">80</div>
<div class="t" style="left:737px;top:173.2px;font-size:6.6px;letter-spacing:0px;color:#111;line-height:6.6px;-webkit-text-stroke:0.1px #222;transform:scaleX(0.87);transform-origin:0 0">High Speed Mode</div>
<div class="a" style="left:783.6px;top:171.6px;width:102.79999999999995px;height:10.400000000000006px;background:#e6e6e6;border:1px solid #c8c8c8"></div>
<div class="t" style="left:786.6px;top:173.20000000000002px;color:#111">Off</div>
<svg class="a" style="left:879.4px;top:174.8px" width="5" height="4"><path d="M0.8 1l1.7 1.6 1.7-1.6" fill="none" stroke="#555" stroke-width="0.7"/></svg>
<div class="t" style="left:737px;top:190.7px;font-size:6.6px;letter-spacing:0px;color:#111;line-height:6.6px;-webkit-text-stroke:0.1px #222;transform:scaleX(0.87);transform-origin:0 0">Temperature</div>
<div class="a" style="left:785px;top:192px;width:80px;height:2.5px;background:#dcdcdc;border-top:0.5px solid #c8c8c8"></div>
<svg class="a" style="left:836px;top:188.5px" width="8" height="10.0"><path d="M0.5 0.5h6v6.0l-3 2.5l-3 -2.5z" fill="#f2f2f2" stroke="#a8a8a8" stroke-width="0.8"/></svg>
<div class="a" style="left:784.5px;top:200.8px;width:1px;height:1.5px;background:#555"></div>
<div class="a" style="left:792.5px;top:200.8px;width:1px;height:1.5px;background:#555"></div>
<div class="a" style="left:800.5px;top:200.8px;width:1px;height:1.5px;background:#555"></div>
<div class="a" style="left:808.5px;top:200.8px;width:1px;height:1.5px;background:#555"></div>
<div class="a" style="left:816.5px;top:200.8px;width:1px;height:1.5px;background:#555"></div>
<div class="a" style="left:824.5px;top:200.8px;width:1px;height:1.5px;background:#555"></div>
<div class="a" style="left:832.5px;top:200.8px;width:1px;height:1.5px;background:#555"></div>
<div class="a" style="left:840.5px;top:200.8px;width:1px;height:1.5px;background:#555"></div>
<div class="a" style="left:848.5px;top:200.8px;width:1px;height:1.5px;background:#555"></div>
<div class="a" style="left:856.5px;top:200.8px;width:1px;height:1.5px;background:#555"></div>
<div class="a" style="left:864.5px;top:200.8px;width:1px;height:1.5px;background:#555"></div>
<div class="a" style="left:870px;top:189px;width:16.399999999999977px;height:10.5px;background:#f8f8f8;border:1px solid #dcdcdc"></div>
<div class="t" style="left:872.5px;top:190.65px;color:#a0a0a0">16.9</div>
<div class="a" style="left:736px;top:98px;width:152px;height:106px;border:1px solid #dadada;border-top:none;background:transparent"></div>
<div class="a" style="left:736px;top:205px;width:152px;height:85px;background:#f3f3f3;border:1px solid #d6d6d6"></div>
<div class="a" style="left:736px;top:206px;width:152px;height:13px;background:#e8f1fa;border:0.5px solid #d0d0d0"></div>
<svg class="a" style="left:736px;top:206.5px" width="12" height="12"><circle cx="6" cy="6" r="4.6" fill="#fafafa" stroke="#333" stroke-width="0.9"/><path d="M3.8 6.9l2.2-2.2 2.2 2.2" fill="none" stroke="#222" stroke-width="0.9"/></svg>
<div class="t" style="left:750px;top:208.9px;font-weight:bold;font-size:6.5px;color:#111;letter-spacing:-0.2px">Image Controls</div>
<div class="a" style="left:876px;top:209.5px;width:8px;height:1.2px;background:#333"></div>
<div class="a" style="left:876px;top:212.0px;width:8px;height:1.2px;background:#333"></div>
<div class="a" style="left:876px;top:214.5px;width:8px;height:1.2px;background:#333"></div>
<div class="t" style="left:737px;top:224.7px;font-size:6.6px;letter-spacing:0px;color:#111;line-height:6.6px;-webkit-text-stroke:0.1px #222;transform:scaleX(0.87);transform-origin:0 0">Brightness</div>
<div class="a" style="left:785px;top:225px;width:80px;height:2.5px;background:#dcdcdc;border-top:0.5px solid #c8c8c8"></div>
<svg class="a" style="left:814.4px;top:222px" width="8" height="10.599999999999994"><path d="M0.5 0.5h6v6.599999999999994l-3 2.5l-3 -2.5z" fill="#f2f2f2" stroke="#a8a8a8" stroke-width="0.8"/></svg>
<div class="a" style="left:784.5px;top:234.2px;width:1px;height:1.5px;background:#555"></div>
<div class="a" style="left:792.5px;top:234.2px;width:1px;height:1.5px;background:#555"></div>
<div class="a" style="left:800.5px;top:234.2px;width:1px;height:1.5px;background:#555"></div>
<div class="a" style="left:808.5px;top:234.2px;width:1px;height:1.5px;background:#555"></div>
<div class="a" style="left:816.5px;top:234.2px;width:1px;height:1.5px;background:#555"></div>
<div class="a" style="left:824.5px;top:234.2px;width:1px;height:1.5px;background:#555"></div>
<div class="a" style="left:832.5px;top:234.2px;width:1px;height:1.5px;background:#555"></div>
<div class="a" style="left:840.5px;top:234.2px;width:1px;height:1.5px;background:#555"></div>
<div class="a" style="left:848.5px;top:234.2px;width:1px;height:1.5px;background:#555"></div>
<div class="a" style="left:856.5px;top:234.2px;width:1px;height:1.5px;background:#555"></div>
<div class="a" style="left:864.5px;top:234.2px;width:1px;height:1.5px;background:#555"></div>
<div class="a" style="left:869px;top:222.4px;width:17.399999999999977px;height:10.599999999999994px;background:#fff;border:1px solid #b8b8b8"></div>
<div class="t" style="left:871.5px;top:224.1px;color:#111">33</div>
<div class="t" style="left:737px;top:242.7px;font-size:6.6px;letter-spacing:0px;color:#111;line-height:6.6px;-webkit-text-stroke:0.1px #222;transform:scaleX(0.87);transform-origin:0 0">White Bal (R)</div>
<div class="a" style="left:785px;top:243px;width:61px;height:2.5px;background:#dcdcdc;border-top:0.5px solid #c8c8c8"></div>
<svg class="a" style="left:823px;top:240px" width="8" height="10.599999999999994"><path d="M0.5 0.5h6v6.599999999999994l-3 2.5l-3 -2.5z" fill="#f2f2f2" stroke="#a8a8a8" stroke-width="0.8"/></svg>
<div class="a" style="left:784.5px;top:252.2px;width:1px;height:1.5px;background:#555"></div>
<div class="a" style="left:788.6px;top:252.2px;width:1px;height:1.5px;background:#555"></div>
<div class="a" style="left:792.6px;top:252.2px;width:1px;height:1.5px;background:#555"></div>
<div class="a" style="left:796.7px;top:252.2px;width:1px;height:1.5px;background:#555"></div>
<div class="a" style="left:800.8px;top:252.2px;width:1px;height:1.5px;background:#555"></div>
<div class="a" style="left:804.8px;top:252.2px;width:1px;height:1.5px;background:#555"></div>
<div class="a" style="left:808.9px;top:252.2px;width:1px;height:1.5px;background:#555"></div>
<div class="a" style="left:813.0px;top:252.2px;width:1px;height:1.5px;background:#555"></div>
<div class="a" style="left:817.0px;top:252.2px;width:1px;height:1.5px;background:#555"></div>
<div class="a" style="left:821.1px;top:252.2px;width:1px;height:1.5px;background:#555"></div>
<div class="a" style="left:825.2px;top:252.2px;width:1px;height:1.5px;background:#555"></div>
<div class="a" style="left:829.2px;top:252.2px;width:1px;height:1.5px;background:#555"></div>
<div class="a" style="left:833.3px;top:252.2px;width:1px;height:1.5px;background:#555"></div>
<div class="a" style="left:837.4px;top:252.2px;width:1px;height:1.5px;background:#555"></div>
<div class="a" style="left:841.4px;top:252.2px;width:1px;height:1.5px;background:#555"></div>
<div class="a" style="left:845.5px;top:252.2px;width:1px;height:1.5px;background:#555"></div>
<div class="a" style="left:850.4px;top:240px;width:17.0px;height:11px;background:#e6e0e0;border:1px solid #a8a8a8"></div>
<div class="t" style="left:852.1999999999999px;top:241.9px;color:#222;letter-spacing:-0.45px">Auto</div>
<div class="a" style="left:869px;top:240px;width:17.399999999999977px;height:11px;background:#fff;border:1px solid #b8b8b8"></div>
<div class="t" style="left:871.5px;top:241.9px;color:#111">67</div>
<div class="t" style="left:737px;top:260.7px;font-size:6.6px;letter-spacing:0px;color:#111;line-height:6.6px;-webkit-text-stroke:0.1px #222;transform:scaleX(0.87);transform-origin:0 0">White Bal (B)</div>
<div class="a" style="left:785px;top:261px;width:61px;height:2.5px;background:#dcdcdc;border-top:0.5px solid #c8c8c8"></div>
<svg class="a" style="left:814px;top:258px" width="8" height="10.600000000000023"><path d="M0.5 0.5h6v6.600000000000023l-3 2.5l-3 -2.5z" fill="#f2f2f2" stroke="#a8a8a8" stroke-width="0.8"/></svg>
<div class="a" style="left:784.5px;top:270.4px;width:1px;height:1.5px;background:#555"></div>
<div class="a" style="left:788.6px;top:270.4px;width:1px;height:1.5px;background:#555"></div>
<div class="a" style="left:792.6px;top:270.4px;width:1px;height:1.5px;background:#555"></div>
<div class="a" style="left:796.7px;top:270.4px;width:1px;height:1.5px;background:#555"></div>
<div class="a" style="left:800.8px;top:270.4px;width:1px;height:1.5px;background:#555"></div>
<div class="a" style="left:804.8px;top:270.4px;width:1px;height:1.5px;background:#555"></div>
<div class="a" style="left:808.9px;top:270.4px;width:1px;height:1.5px;background:#555"></div>
<div class="a" style="left:813.0px;top:270.4px;width:1px;height:1.5px;background:#555"></div>
<div class="a" style="left:817.0px;top:270.4px;width:1px;height:1.5px;background:#555"></div>
<div class="a" style="left:821.1px;top:270.4px;width:1px;height:1.5px;background:#555"></div>
<div class="a" style="left:825.2px;top:270.4px;width:1px;height:1.5px;background:#555"></div>
<div class="a" style="left:829.2px;top:270.4px;width:1px;height:1.5px;background:#555"></div>
<div class="a" style="left:833.3px;top:270.4px;width:1px;height:1.5px;background:#555"></div>
<div class="a" style="left:837.4px;top:270.4px;width:1px;height:1.5px;background:#555"></div>
<div class="a" style="left:841.4px;top:270.4px;width:1px;height:1.5px;background:#555"></div>
<div class="a" style="left:845.5px;top:270.4px;width:1px;height:1.5px;background:#555"></div>
<div class="a" style="left:850.4px;top:258px;width:17.0px;height:11px;background:#e6e0e0;border:1px solid #a8a8a8"></div>
<div class="t" style="left:852.1999999999999px;top:259.9px;color:#222;letter-spacing:-0.45px">Auto</div>
<div class="a" style="left:869px;top:258px;width:17.399999999999977px;height:11px;background:#fff;border:1px solid #b8b8b8"></div>
<div class="t" style="left:871.5px;top:259.9px;color:#111">52</div>
<div class="t" style="left:737px;top:274.2px;font-size:6.6px;letter-spacing:0px;color:#111;line-height:6.6px;-webkit-text-stroke:0.1px #222;transform:scaleX(0.87);transform-origin:0 0">Timestamp<br>Frames</div>
<div class="a" style="left:783.6px;top:275.6px;width:102.79999999999995px;height:10.799999999999955px;background:#e6e6e6;border:1px solid #c8c8c8"></div>
<div class="t" style="left:786.6px;top:277.4px;color:#111">Off</div>
<svg class="a" style="left:879.4px;top:279.0px" width="5" height="4"><path d="M0.8 1l1.7 1.6 1.7-1.6" fill="none" stroke="#555" stroke-width="0.7"/></svg>
<div class="a" style="left:736px;top:293px;width:152px;height:11.399999999999977px;background:#dcc3dc;border:0.5px solid #d0d0d0"></div>
<svg class="a" style="left:736px;top:292.7px" width="12" height="12"><circle cx="6" cy="6" r="4.6" fill="#fafafa" stroke="#333" stroke-width="0.9"/><path d="M3.8 5.1l2.2 2.2 2.2-2.2" fill="none" stroke="#222" stroke-width="0.9"/></svg>
<div class="t" style="left:750px;top:295.09999999999997px;font-weight:bold;font-size:6.5px;color:#111;letter-spacing:-0.2px">Misc Controls</div>
<div class="a" style="left:876px;top:295.7px;width:8px;height:1.2px;background:#333"></div>
<div class="a" style="left:876px;top:298.2px;width:8px;height:1.2px;background:#333"></div>
<div class="a" style="left:876px;top:300.7px;width:8px;height:1.2px;background:#333"></div>
<div class="a" style="left:736px;top:306.5px;width:152px;height:84px;background:#f3f3f3;border:1px solid #d6d6d6"></div>
<div class="a" style="left:736px;top:307.4px;width:152px;height:12.600000000000023px;background:#e6e6f6;border:0.5px solid #d0d0d0"></div>
<svg class="a" style="left:736px;top:307.7px" width="12" height="12"><circle cx="6" cy="6" r="4.6" fill="#fafafa" stroke="#333" stroke-width="0.9"/><path d="M3.8 6.9l2.2-2.2 2.2 2.2" fill="none" stroke="#222" stroke-width="0.9"/></svg>
<div class="t" style="left:750px;top:310.09999999999997px;font-weight:bold;font-size:6.5px;color:#111;letter-spacing:-0.2px">Preprocessing</div>
<div class="a" style="left:876px;top:310.7px;width:8px;height:1.2px;background:#333"></div>
<div class="a" style="left:876px;top:313.2px;width:8px;height:1.2px;background:#333"></div>
<div class="a" style="left:876px;top:315.7px;width:8px;height:1.2px;background:#333"></div>
<div class="t" style="left:737px;top:325.7px;font-size:6.6px;letter-spacing:0px;color:#111;line-height:6.6px;-webkit-text-stroke:0.1px #222;transform:scaleX(0.87);transform-origin:0 0">Subtract Dark</div>
<div class="a" style="left:782.4px;top:322.6px;width:27.2px;height:11.4px;background:#e2e2e2;border:1px solid #8a8a8a"></div>
<div class="t" style="left:784px;top:324.8px;color:#111;letter-spacing:-0.4px">Browse...</div>
<div class="a" style="left:811.6px;top:322.6px;width:74.79999999999995px;height:11.399999999999977px;background:#e6e6e6;border:1px solid #c8c8c8"></div>
<div class="t" style="left:814.6px;top:324.7px;color:#1a5a1a">C:¥Users¥user¥De***</div>
<svg class="a" style="left:879.4px;top:326.3px" width="5" height="4"><path d="M0.8 1l1.7 1.6 1.7-1.6" fill="none" stroke="#555" stroke-width="0.7"/></svg>
<div class="t" style="left:737px;top:342.7px;font-size:6.6px;letter-spacing:0px;color:#111;line-height:6.6px;-webkit-text-stroke:0.1px #222;transform:scaleX(0.87);transform-origin:0 0">Apply Flat</div>
<div class="a" style="left:782.4px;top:339.4px;width:27.2px;height:11.6px;background:#e2e2e2;border:1px solid #8a8a8a"></div>
<div class="t" style="left:784px;top:341.8px;color:#111;letter-spacing:-0.4px">Browse...</div>
<div class="a" style="left:811.6px;top:339.4px;width:74.79999999999995px;height:11.600000000000023px;background:#e6e6e6;border:1px solid #c8c8c8"></div>
<div class="t" style="left:814.6px;top:341.59999999999997px;color:#1a5a1a">None</div>
<svg class="a" style="left:879.4px;top:343.2px" width="5" height="4"><path d="M0.8 1l1.7 1.6 1.7-1.6" fill="none" stroke="#555" stroke-width="0.7"/></svg>
<div class="t" style="left:737px;top:356.2px;font-size:6.6px;letter-spacing:0px;color:#111;line-height:6.6px;-webkit-text-stroke:0.1px #222;transform:scaleX(0.87);transform-origin:0 0">Banding<br>Suppression</div>
<div class="a" style="left:785px;top:360px;width:80px;height:2.5px;background:#dcdcdc;border-top:0.5px solid #c8c8c8"></div>
<svg class="a" style="left:830px;top:357px" width="8" height="10"><path d="M0.5 0.5h6v6l-3 2.5l-3 -2.5z" fill="#f2f2f2" stroke="#a8a8a8" stroke-width="0.8"/></svg>
<div class="a" style="left:784.5px;top:368.8px;width:1px;height:1.5px;background:#555"></div>
<div class="a" style="left:792.5px;top:368.8px;width:1px;height:1.5px;background:#555"></div>
<div class="a" style="left:800.5px;top:368.8px;width:1px;height:1.5px;background:#555"></div>
<div class="a" style="left:808.5px;top:368.8px;width:1px;height:1.5px;background:#555"></div>
<div class="a" style="left:816.5px;top:368.8px;width:1px;height:1.5px;background:#555"></div>
<div class="a" style="left:824.5px;top:368.8px;width:1px;height:1.5px;background:#555"></div>
<div class="a" style="left:832.5px;top:368.8px;width:1px;height:1.5px;background:#555"></div>
<div class="a" style="left:840.5px;top:368.8px;width:1px;height:1.5px;background:#555"></div>
<div class="a" style="left:848.5px;top:368.8px;width:1px;height:1.5px;background:#555"></div>
<div class="a" style="left:856.5px;top:368.8px;width:1px;height:1.5px;background:#555"></div>
<div class="a" style="left:864.5px;top:368.8px;width:1px;height:1.5px;background:#555"></div>
<div class="a" style="left:869px;top:357.4px;width:17.399999999999977px;height:10.600000000000023px;background:#fff;border:1px solid #b8b8b8"></div>
<div class="t" style="left:871.5px;top:359.09999999999997px;color:#111">61</div>
<div class="t" style="left:737px;top:374.2px;font-size:6.6px;letter-spacing:0px;color:#111;line-height:6.6px;-webkit-text-stroke:0.1px #222;transform:scaleX(0.87);transform-origin:0 0">Banding<br>Threshold</div>
<div class="a" style="left:785px;top:378px;width:80px;height:2.5px;background:#dcdcdc;border-top:0.5px solid #c8c8c8"></div>
<svg class="a" style="left:851px;top:375.5px" width="8" height="10.0"><path d="M0.5 0.5h6v6.0l-3 2.5l-3 -2.5z" fill="#f2f2f2" stroke="#a8a8a8" stroke-width="0.8"/></svg>
<div class="a" style="left:784.5px;top:386.4px;width:1px;height:1.5px;background:#555"></div>
<div class="a" style="left:792.5px;top:386.4px;width:1px;height:1.5px;background:#555"></div>
<div class="a" style="left:800.5px;top:386.4px;width:1px;height:1.5px;background:#555"></div>
<div class="a" style="left:808.5px;top:386.4px;width:1px;height:1.5px;background:#555"></div>
<div class="a" style="left:816.5px;top:386.4px;width:1px;height:1.5px;background:#555"></div>
<div class="a" style="left:824.5px;top:386.4px;width:1px;height:1.5px;background:#555"></div>
<div class="a" style="left:832.5px;top:386.4px;width:1px;height:1.5px;background:#555"></div>
<div class="a" style="left:840.5px;top:386.4px;width:1px;height:1.5px;background:#555"></div>
<div class="a" style="left:848.5px;top:386.4px;width:1px;height:1.5px;background:#555"></div>
<div class="a" style="left:856.5px;top:386.4px;width:1px;height:1.5px;background:#555"></div>
<div class="a" style="left:864.5px;top:386.4px;width:1px;height:1.5px;background:#555"></div>
<div class="a" style="left:869px;top:375.4px;width:17.399999999999977px;height:10.600000000000023px;background:#fff;border:1px solid #b8b8b8"></div>
<div class="t" style="left:871.5px;top:377.09999999999997px;color:#111">35.0</div>
<div class="a" style="left:736px;top:392.6px;width:152px;height:11.799999999999955px;background:#f8c0ca;border:0.5px solid #d0d0d0"></div>
<svg class="a" style="left:736px;top:392.5px" width="12" height="12"><circle cx="6" cy="6" r="4.6" fill="#fafafa" stroke="#333" stroke-width="0.9"/><path d="M3.8 6.9l2.2-2.2 2.2 2.2" fill="none" stroke="#222" stroke-width="0.9"/></svg>
<div class="t" style="left:750px;top:394.9px;font-weight:bold;font-size:6.5px;color:#111;letter-spacing:-0.2px">Display Histogram Stretch</div>
<div class="a" style="left:876px;top:395.5px;width:8px;height:1.2px;background:#333"></div>
<div class="a" style="left:876px;top:398.0px;width:8px;height:1.2px;background:#333"></div>
<div class="a" style="left:876px;top:400.5px;width:8px;height:1.2px;background:#333"></div>
<svg class="a" style="left:735.5px;top:404.5px" width="153.5" height="51.5" viewBox="735.5 404.5 153.5 51.5">
<rect x="735.5" y="404.5" width="153.5" height="51.5" fill="#000"/>
<path d="M760 404.5V456" stroke="#78784a" stroke-width="1" stroke-dasharray="2.2 1.6"/>
<path d="M855 404.5V456" stroke="#78784a" stroke-width="1" stroke-dasharray="2.2 1.6"/>
<path d="M872.5 404.5V456" stroke="#78784a" stroke-width="1" stroke-dasharray="2.2 1.6"/>
<path d="M735.5 429 L768 429.5 C780 431, 790 432, 800 434.5 C815 438, 830 440, 845 441 L872 442.5 L872 444 L845 443 C825 442, 805 441, 795 439.5 C785 438, 778 432, 768 431.2 L735.5 431.2 Z" fill="#1828b0"/>
<path d="M772 428.2 C785 430, 795 435, 803 438.5 C810 440.5, 815 441, 822 441.5" fill="none" stroke="#2a8a3a" stroke-width="0.9"/>
<path d="M735.5 424.8 C750 424.5, 770 425.5, 790 426 C805 427, 815 433, 830 438 C840 440.5, 850 440.5, 872 440.5 L872.5 433 L873.5 443 L850 443 C835 443, 825 440, 812 436.5 C800 432, 790 430, 770 429.8 L735.5 429.6 Z" fill="#e81818"/>
<path d="M735.5 423.2 C742 422.8, 750 422.2, 760 423.6 C766 424.5, 772 428, 780 433.5 C786 438, 792 440, 800 440.5 C815 441, 830 440.8, 843 441.5 C850 443, 862 442.5, 872 441.5" fill="none" stroke="#f6f6f6" stroke-width="1.3"/>
<path d="M760 456 C785 452, 810 448, 830 444 C845 438, 858 428, 873 404" fill="none" stroke="#b8b040" stroke-width="0.9"/>
<rect x="873.8" y="405.7" width="14" height="13.199999999999989" fill="#ececec" stroke="#bdbdbd" stroke-width="0.6"/>
<path d="M882.8 407.29999999999995L877.8 413.29999999999995h3l-2 4.5 5-6h-3l2-4.5z" fill="none" stroke="#555" stroke-width="0.8"/>
<rect x="873.8" y="421" width="14" height="13.600000000000023" fill="#ececec" stroke="#bdbdbd" stroke-width="0.6"/>
<path d="M877.5 427.8a3.3 3.3 0 1 0 1-2.4" fill="none" stroke="#555" stroke-width="1"/><path d="M878.1999999999999 423.8v2.2h2.2" fill="none" stroke="#555" stroke-width="1"/>
<rect x="873.8" y="436.5" width="14" height="13.0" fill="#ececec" stroke="#bdbdbd" stroke-width="0.6"/>
<rect x="877.3" y="439.5" width="7" height="7" fill="#555"/><rect x="878.8" y="439.5" width="4" height="2.5" fill="#ececec"/>
</svg>
<div class="a" style="left:721px;top:41px;width:10px;height:406px;background:#f7f7f7"></div>
<div class="a" style="left:722px;top:188px;width:8px;height:131px;background:#cdcdcd"></div>
<svg class="a" style="left:723px;top:44px" width="7" height="5"><path d="M1 3.5l2.5-2.5 2.5 2.5" fill="none" stroke="#444" stroke-width="0.9"/></svg>
<svg class="a" style="left:723px;top:440px" width="7" height="5"><path d="M1 1.2l2.5 2.5 2.5-2.5" fill="none" stroke="#444" stroke-width="0.9"/></svg>
<div class="a" style="left:0px;top:447px;width:731px;height:10px;background:#f7f7f7;border-bottom:1px solid #dcdcdc"></div>
<div class="a" style="left:250px;top:448px;width:288px;height:8px;background:#cdcdcd"></div>
<svg class="a" style="left:3px;top:449px" width="5" height="7"><path d="M3.5 1l-2.5 2.5 2.5 2.5" fill="none" stroke="#444" stroke-width="0.9"/></svg>
<svg class="a" style="left:714px;top:449px" width="5" height="7"><path d="M1.2 1l2.5 2.5-2.5 2.5" fill="none" stroke="#444" stroke-width="0.9"/></svg>
<div class="a" style="left:731px;top:41px;width:2.6px;height:416px;background:#666"></div>
<div class="a" style="left:891px;top:41px;width:9px;height:416px;background:#f0f0f0"></div>
<div class="a" style="left:891px;top:172px;width:9px;height:276px;background:#c4c4c4"></div>
<svg class="a" style="left:892px;top:53px" width="7" height="5"><path d="M1 3.5l2.5-2.5 2.5 2.5" fill="none" stroke="#555" stroke-width="0.8"/></svg>
<svg class="a" style="left:892px;top:451px" width="7" height="5"><path d="M1 1.2l2.5 2.5 2.5-2.5" fill="none" stroke="#555" stroke-width="0.8"/></svg>
<div class="a" style="left:0px;top:457px;width:900px;height:13.5px;background:#e4e4e4;border-top:1px solid #d8d8d8"></div>
<div class="a" style="left:2px;top:459.5px;width:46.5px;height:12px;background:#f7f7f7;border:1px solid #c8c8c8;border-bottom:none;border-radius:1.5px 1.5px 0 0"></div>
<svg class="a" style="left:5px;top:461px" width="9" height="8"><rect x="0" y="3" width="3" height="4" fill="#d03020"/><rect x="3" y="0.5" width="5" height="4" fill="#f0b020"/><rect x="3" y="4.5" width="5" height="3" fill="#3060c0"/></svg>
<div class="t" style="left:16px;top:461px;color:#888">Live Stack</div>
<div class="a" style="left:0px;top:470.5px;width:900px;height:12.5px;background:#f0f0f0;border-bottom:0.8px solid #fafafa"></div>
<div class="a" style="left:1px;top:471.5px;width:240px;height:10.5px;border:1px solid #c0c0c0;border-right-color:#e0e0e0"></div>
<div class="t" style="left:3px;top:473.3px;color:#222;letter-spacing:-0.22px">Previewing : 319 frames (1 dropped) in 0:39:32, exposure 8.0s , last frame 8.6s</div>
<div class="a" style="left:242px;top:471.5px;width:111px;height:10.5px;border:1px solid #c0c0c0;border-right-color:#e0e0e0"></div>
<div class="t" style="left:244px;top:473.3px;color:#222;letter-spacing:-0.22px">Memory: 2 of 91 frames in use.</div>
<div class="a" style="left:354px;top:471.5px;width:112px;height:10.5px;border:1px solid #c0c0c0;border-right-color:#e0e0e0"></div>
<div class="t" style="left:356px;top:473.3px;color:#222;letter-spacing:-0.3px">209 Stacked, 0 Ignored, 27m 52s</div>
<div class="t" style="left:777px;top:473.3px;color:#222;letter-spacing:-0.2px">Frame:</div>
<div class="a" style="left:799px;top:472.5px;width:55px;height:9px;background:#e0e0e0;border:1px solid #c8c8c8"></div>
<div class="a" style="left:799.5px;top:473px;width:20px;height:8px;background:#13b33a"></div>
<div class="t" style="left:857px;top:473.3px;color:#222;letter-spacing:-0.2px">3.6/4.4</div>
<div class="a" style="left:0px;top:483px;width:900px;height:23px;background:#1f1f1f"></div>
<div class="a" style="left:0px;top:483px;width:27px;height:23px;background:#181818"></div>
<svg class="a" style="left:9px;top:489px" width="11" height="11"><path d="M0 1.3L4.6 0.7V5H0z M5.3 0.6L10.5 0V5H5.3z M0 5.7h4.6V10L0 9.4z M5.3 5.7h5.2V10.7L5.3 10z" fill="#fff"/></svg>
<div class="a" style="left:27px;top:483px;width:193.5px;height:23px;background:#f2f2f2"></div>
<svg class="a" style="left:33px;top:489px" width="11" height="11"><circle cx="6.3" cy="4.2" r="3.2" fill="none" stroke="#222" stroke-width="1"/><path d="M4 6.6l-3 3" stroke="#222" stroke-width="1.1"/></svg>
<div class="t" style="left:49.5px;top:490px;color:#1a1a1a;font-size:7.2px;letter-spacing:0px;line-height:9px;-webkit-text-stroke:0.2px #333">ここに入力して検索</div>
<svg class="a" style="left:228px;top:489px" width="12" height="12"><circle cx="6" cy="6" r="4.2" fill="none" stroke="#fff" stroke-width="1.2"/></svg>
<svg class="a" style="left:255px;top:489px" width="12" height="12"><rect x="1" y="3" width="7" height="6" fill="none" stroke="#ddd" stroke-width="1"/><path d="M1 1h7M1 11h7M10 1v10" stroke="#ddd" stroke-width="1"/></svg>
<svg class="a" style="left:283px;top:488px" width="13" height="13"><path d="M2 7.2h8.6c0.3-3.2-1.6-5.6-4.6-5.6C3 1.6 1 4 1.2 7 1.4 10 3.8 12 6.8 12c1.4 0 2.6-0.3 3.6-0.9V8.9c-1 0.7-2.2 1-3.4 1-2.4 0-3.6-1.4-3.8-2.7h0z M3.4 5.6c0.3-1.4 1.4-2.2 2.7-2.2 1.4 0 2.5 0.9 2.5 2.2z" fill="#1e8ee8"/></svg>
<svg class="a" style="left:311px;top:489px" width="13" height="11"><path d="M0.5 1h4.5l1 1.3h6.5v8H0.5z" fill="#e8b830"/><rect x="0.5" y="3.5" width="12" height="6.8" fill="#f8d060"/><rect x="3" y="5.5" width="7" height="1.5" fill="#3a8ad8"/></svg>
<svg class="a" style="left:338px;top:488px" width="12" height="13"><path d="M3.5 3.5v-1.2c0-1.2 1-2 2.5-2s2.5 0.8 2.5 2v1.2" fill="none" stroke="#eee" stroke-width="0.9"/><rect x="0.8" y="3.5" width="10.4" height="9" fill="#f4f4f4"/><rect x="3.2" y="5.5" width="2.5" height="2.5" fill="#f25022"/><rect x="6.2" y="5.5" width="2.5" height="2.5" fill="#7fba00"/><rect x="3.2" y="8.5" width="2.5" height="2.5" fill="#00a4ef"/><rect x="6.2" y="8.5" width="2.5" height="2.5" fill="#ffb900"/></svg>
<svg class="a" style="left:365px;top:489px" width="13" height="11"><rect x="0.5" y="1" width="12" height="9" fill="#1c8ad8"/><path d="M0.5 1l6 5 6-5" fill="none" stroke="#e8f4ff" stroke-width="1"/></svg>
<svg class="a" style="left:392px;top:488px" width="13" height="13"><ellipse cx="6" cy="7.5" rx="5.5" ry="4.5" fill="#c8d4e0"/><circle cx="3.5" cy="6.5" r="1" fill="#e04040"/><circle cx="5.5" cy="5" r="1" fill="#40a040"/><circle cx="4" cy="9" r="1" fill="#4060e0"/><path d="M7 9l5-8" stroke="#f0c040" stroke-width="1.5"/></svg>
<div class="a" style="left:414px;top:483px;width:27px;height:23px;background:#3a3a3a"></div>
<div class="a" style="left:414px;top:504.5px;width:27px;height:1.5px;background:#7ab0e0"></div>
<svg class="a" style="left:419px;top:487px" width="16" height="16"><defs><radialGradient id="scg" cx="0.4" cy="0.35"><stop offset="0" stop-color="#d8d8d8"/><stop offset="1" stop-color="#555"/></radialGradient></defs><circle cx="8.5" cy="7.5" r="6.3" fill="url(#scg)"/><path d="M3 6h11M2.5 8.5h12M3.5 11h10" stroke="#777" stroke-width="0.7" opacity="0.6"/><ellipse cx="5.5" cy="11" rx="3.5" ry="2" fill="#6a9a80" opacity="0.8"/></svg>
<svg class="a" style="left:767px;top:491px" width="8" height="6"><path d="M1 4.5l3-3 3 3" fill="none" stroke="#ddd" stroke-width="0.9"/></svg>
<svg class="a" style="left:780px;top:490px" width="12" height="9"><rect x="1" y="3" width="9" height="5" fill="#ddd"/><rect x="10" y="4.5" width="1.5" height="2" fill="#ddd"/><rect x="2" y="0.5" width="3" height="2" fill="#ddd"/></svg>
<svg class="a" style="left:796px;top:489px" width="11" height="11"><path d="M1 10a9 9 0 0 1 9-9 M3.5 10a6.5 6.5 0 0 1 6.5-6.5 M6 10a4 4 0 0 1 4-4" fill="none" stroke="#bbb" stroke-width="0.9"/><circle cx="9.5" cy="9.5" r="1" fill="#ddd"/></svg>
<svg class="a" style="left:810px;top:489px" width="12" height="11"><path d="M1 4h2.5l3-2.5v8L3.5 7H1z" fill="none" stroke="#ddd" stroke-width="0.9"/><path d="M8 3.5a3 3 0 0 1 0 4 M9.5 2a5 5 0 0 1 0 7" fill="none" stroke="#ddd" stroke-width="0.9"/></svg>
<div class="t" style="left:824.5px;top:488.5px;color:#eee;font-size:10.5px;line-height:11px;letter-spacing:0">A</div>
<div class="t" style="left:842px;top:485.5px;color:#eee;font-size:7px;letter-spacing:-0.1px">21:14</div>
<div class="t" style="left:833.5px;top:494.5px;color:#eee;font-size:7px;letter-spacing:-0.25px">2020/04/14</div>
<svg class="a" style="left:876px;top:489px" width="12" height="12"><path d="M1 1h9.5v7H5L2.5 10.5V8H1z" fill="none" stroke="#eee" stroke-width="0.9"/></svg>
<div class="a" style="left:897.5px;top:483px;width:1px;height:23px;background:#555"></div>
<div class="a" style="left:735px;top:41px;width:165px;height:9px;background:linear-gradient(#e4ebf2,#d5e0ea)"></div>
<div class="t" style="left:736.5px;top:41.5px;color:#1e2a3a;font-size:7px;letter-spacing:-0.2px">Camera Control Panel</div>
<svg class="a" style="left:892px;top:42px" width="6" height="8"><rect x="1" y="0.5" width="3.5" height="4.5" rx="1" fill="#333"/><path d="M0.5 5h4.5M2.75 5v2.5" stroke="#333" stroke-width="0.8"/></svg>
</body></html>
